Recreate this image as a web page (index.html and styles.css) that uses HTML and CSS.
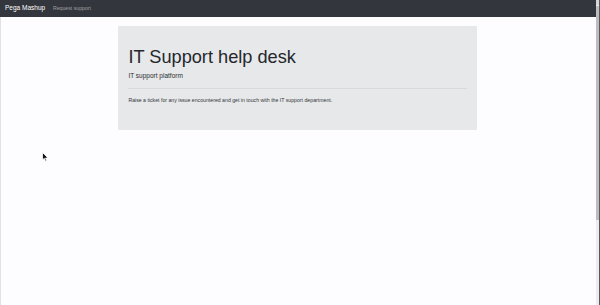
FILE: index.html
```html
<!DOCTYPE html>
<html lang="en">
<head>
<meta charset="utf-8">
<title>Pega Mashup</title>
<link rel="stylesheet" href="styles.css">
</head>
<body>
<div class="window">
  <div class="page">
    <nav class="navbar">
      <a class="brand" href="#">Pega Mashup</a>
      <a class="nav-link" href="#">Request support</a>
    </nav>
    <main class="container">
      <section class="jumbotron">
        <h1 class="display">IT Support help desk</h1>
        <p class="lead">IT support platform</p>
        <hr class="divider">
        <p class="text">Raise a ticket for any issue encountered and get in touch with the IT support department.</p>
      </section>
    </main>
    <svg class="cursor" width="7" height="10" viewBox="0 0 7 10"><path d="M0.5 0.5 L0.5 8 L2.3 6.3 L3.5 9.2 L4.6 8.7 L3.5 6 L6 6 Z" fill="#111" stroke="#fff" stroke-width="0.8" stroke-linejoin="round"/></svg>
  </div>
  <div class="scrollbar">
    <div class="track">
      <div class="arrow"></div>
      <div class="thumb"></div>
    </div>
    <div class="edge"></div>
  </div>
</div>
</body>
</html>
```
FILE: styles.css
```css
html, body {
  margin: 0;
  padding: 0;
  height: 100%;
}
body {
  font-family: "Liberation Sans", Arial, sans-serif;
  color: #212529;
  background: #fdfcfe;
}
.window {
  display: flex;
  height: 305px;
  width: 600px;
  overflow: hidden;
}
.page {
  position: relative;
  flex: 1;
  border-left: 1px solid #e2e2e4;
  box-sizing: border-box;
}
.navbar {
  display: flex;
  align-items: center;
  height: 17px;
  padding: 0 5px;
  background: #33363c;
  margin-left: -1px;
}
.brand {
  color: #fff;
  text-decoration: none;
  font-size: 6.5px;
  margin-right: 5.2px;
  line-height: 1;
}
.nav-link {
  color: rgba(255, 255, 255, 0.5);
  text-decoration: none;
  font-size: 5.2px;
  padding: 0 2.6px;
  line-height: 1;
}
.container {
  width: 359px;
  margin: 9px 0 0 117px;
}
.jumbotron {
  background: #e6e8ea;
  border-radius: 1px;
  padding: 20.5px 10.4px 20px;
}
.display {
  margin: 0 0 2.6px;
  font-size: 18.2px;
  font-weight: 300;
  line-height: 1.2;
  color: #25272a;
}
.lead {
  margin: 0 0 5.2px;
  font-size: 6.5px;
  font-weight: 300;
  line-height: 1.5;
  color: #2c2e31;
}
.divider {
  margin: 7.5px 0;
  border: 0;
  border-top: 1px solid rgba(0, 0, 0, 0.06);
}
.text {
  margin: 0 0 5.2px;
  font-size: 5.2px;
  line-height: 1.5;
  color: #34363a;
}
.cursor {
  position: absolute;
  left: 41px;
  top: 152px;
}
.scrollbar {
  display: flex;
  width: 4px;
  height: 305px;
}
.track {
  display: flex;
  flex-direction: column;
  width: 2.5px;
  background: #ececee;
}
.arrow {
  height: 5px;
  background: #d6d6d8;
}
.thumb {
  height: 214px;
  background: #bdbdbf;
  margin-top: 1px;
}
.edge {
  width: 1.5px;
  background: #5a5a5c;
}
```
